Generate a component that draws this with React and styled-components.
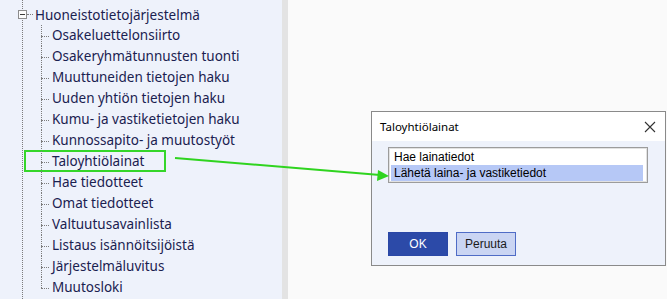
import React from "react";
import styled, { createGlobalStyle } from "styled-components";

const Global = createGlobalStyle`
  html, body { margin: 0; padding: 0; }
  body { width: 667px; height: 299px; overflow: hidden; background: #fafafa; }
  #root { height: 100%; }
`;

const Page = styled.div`
  position: relative;
  display: flex;
  width: 667px;
  height: 299px;
  font-family: "Noto Sans", "Open Sans", sans-serif;
`;

const Sidebar = styled.aside`
  width: 282px;
  height: 100%;
  flex: none;
  background: #eef2fb;
  padding-left: 22px;
  box-sizing: border-box;
  overflow: hidden;
`;

const Branch = styled.div`
  height: 100%;
  border-left: 1px dotted #7c7c7c;
  padding-top: 4px;
  box-sizing: border-box;
`;

const RootRow = styled.div`
  display: flex;
  align-items: center;
  height: 21px;
  margin-left: -5px;
  color: #1a2150;
  font-size: 13.5px;
`;

const Expander = styled.span`
  position: relative;
  width: 9px;
  height: 9px;
  box-sizing: border-box;
  border: 1px solid #8c8c8c;
  background: #fbfbfb;
  flex: none;
  &::after {
    content: "";
    position: absolute;
    left: 1px;
    right: 1px;
    top: 3px;
    border-top: 1px solid #3a3a3a;
  }
`;

const Connector = styled.span`
  width: 6px;
  margin-right: 2px;
  border-top: 1px dotted #7c7c7c;
`;

const Children = styled.ul`
  list-style: none;
  margin: 0 0 0 18px;
  padding: 0;
`;

const ChildRow = styled.li`
  position: relative;
  height: 21px;
  line-height: 21px;
  padding-left: 11px;
  color: #1a2150;
  font-size: 13.5px;
  white-space: nowrap;
  &::before {
    content: "";
    position: absolute;
    left: 0;
    top: 11px;
    width: 8px;
    border-top: 1px dotted #7c7c7c;
  }
  &::after {
    content: "";
    position: absolute;
    left: 0;
    top: 0;
    height: ${(p) => (p.$last ? "11px" : "21px")};
    border-left: 1px dotted #7c7c7c;
  }
`;

const Callout = styled.span`
  position: absolute;
  left: -17px;
  top: -1px;
  width: 142px;
  height: 22px;
  box-sizing: border-box;
  border: 2px solid #35d62a;
  pointer-events: none;
`;

const Splitter = styled.div`
  width: 6px;
  flex: none;
  background: #e3e3e3;
`;

const Main = styled.main`
  position: relative;
  flex: 1;
  background: #fafafa;
`;

const Dialog = styled.section`
  position: absolute;
  left: 83px;
  top: 111px;
  width: 295px;
  height: 155px;
  box-sizing: border-box;
  border: 1px solid #8a8a8a;
  background: #eef2fb;
  display: flex;
  flex-direction: column;
`;

const TitleBar = styled.header`
  height: 29px;
  flex: none;
  background: #ffffff;
  display: flex;
  align-items: center;
  justify-content: space-between;
  padding: 0 8px 0 8px;
  font-family: "Noto Sans", sans-serif;
  font-size: 11.5px;
  color: #000;
`;

const CloseButton = styled.span`
  display: flex;
  width: 12px;
  height: 12px;
  margin-right: 1px;
`;

const DialogBody = styled.div`
  flex: 1;
  display: flex;
  flex-direction: column;
  padding: 6px 16px 9px 16px;
`;

const ListBox = styled.ul`
  list-style: none;
  margin: 0;
  padding: 1px 4px 1px 2px;
  width: 260px;
  height: 36px;
  box-sizing: border-box;
  border: 1px solid #9c9c9c;
  box-shadow: inset 0 0 0 1px #e2e2e2;
  background: #ffffff;
  font-family: "Liberation Sans", Arial, sans-serif;
  font-size: 12px;
  color: #000;
`;

const ListItem = styled.li`
  height: 16px;
  line-height: 16px;
  padding-left: 3px;
  background: ${(p) => (p.$selected ? "#b6c8f6" : "transparent")};
`;

const ButtonRow = styled.div`
  margin-top: auto;
  display: flex;
  gap: 8px;
`;

const Button = styled.button`
  width: 60px;
  height: 24px;
  box-sizing: border-box;
  font-family: "Liberation Sans", Arial, sans-serif;
  font-size: 12px;
  padding: 0;
  border: 1px solid ${(p) => (p.$primary ? "#2a47a6" : "#4f6cc6")};
  background: ${(p) => (p.$primary ? "#2c4aa8" : "#cad5f3")};
  color: ${(p) => (p.$primary ? "#ffffff" : "#1a1a1a")};
`;

const Overlay = styled.svg`
  position: absolute;
  left: 0;
  top: 0;
  pointer-events: none;
`;

const children = [
  "Osakeluettelonsiirto",
  "Osakeryhmätunnusten tuonti",
  "Muuttuneiden tietojen haku",
  "Uuden yhtiön tietojen haku",
  "Kumu- ja vastiketietojen haku",
  "Kunnossapito- ja muutostyöt",
  "Taloyhtiölainat",
  "Hae tiedotteet",
  "Omat tiedotteet",
  "Valtuutusavainlista",
  "Listaus isännöitsijöistä",
  "Järjestelmäluvitus",
  "Muutosloki",
];

export default function App() {
  return (
    <>
      <Global />
      <Page>
        <Sidebar>
          <Branch>
            <RootRow>
              <Expander />
              <Connector />
              Huoneistotietojärjestelmä
            </RootRow>
            <Children>
              {children.map((c, i) => (
                <ChildRow key={c} $last={i === children.length - 1}>
                  {c === "Taloyhtiölainat" && <Callout />}
                  {c}
                </ChildRow>
              ))}
            </Children>
          </Branch>
        </Sidebar>
        <Splitter />
        <Main>
          <Dialog>
            <TitleBar>
              Taloyhtiölainat
              <CloseButton>
                <svg width="12" height="12" viewBox="0 0 12 12">
                  <path d="M1 1 L11 11 M11 1 L1 11" stroke="#333" strokeWidth="1.1" fill="none" />
                </svg>
              </CloseButton>
            </TitleBar>
            <DialogBody>
              <ListBox>
                <ListItem>Hae lainatiedot</ListItem>
                <ListItem $selected>Lähetä laina- ja vastiketiedot</ListItem>
              </ListBox>
              <ButtonRow>
                <Button $primary>OK</Button>
                <Button>Peruuta</Button>
              </ButtonRow>
            </DialogBody>
          </Dialog>
        </Main>
        <Overlay width="667" height="299" viewBox="0 0 667 299">
          <line x1="175" y1="158" x2="380" y2="175" stroke="#2fd41f" strokeWidth="2" />
          <polygon points="389,176 378,170 377,181" fill="#2fd41f" />
        </Overlay>
      </Page>
    </>
  );
}
